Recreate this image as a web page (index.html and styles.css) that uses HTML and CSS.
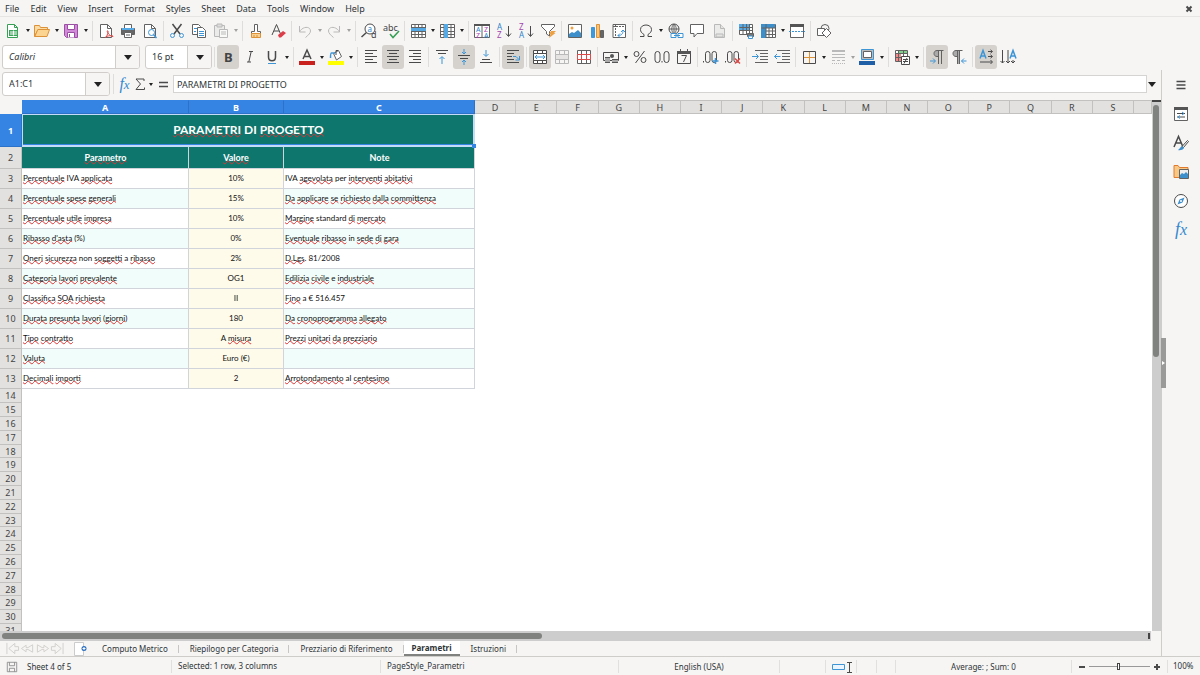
FILE: index.html
```html
<!DOCTYPE html>
<html lang="en">
<head>
<meta charset="utf-8">
<title>Parametri</title>
<link rel="stylesheet" href="styles.css">
</head>
<body>
<div class="app">
<nav class="menubar" aria-label="Menu">
<button>File</button><button>Edit</button><button>View</button><button>Insert</button><button>Format</button><button>Styles</button><button>Sheet</button><button>Data</button><button>Tools</button><button>Window</button><button>Help</button>
<button class="close" aria-label="Close"><svg viewBox="0 0 8 8" width="8" height="8"><path class="k heavy" d="M1.5 1.5l5 5M6.500 1.500l-5 5"/></svg></button>
</nav>

<div class="toolbar standard" role="toolbar" aria-label="Standard">
<button class="tool" aria-label="New"><svg viewBox="0 0 16 16"><path class="gn paper" d="M2.500 1.500h7l3 3v10h-10z"/><path class="gn" d="M9.500 1.500v3h3"/><path class="gnf" d="M4 7h9v6H4z"/><path class="w" d="M5 9h7M5 11h7M8.500 7.500v5"/></svg></button><button class="arrow" aria-label="New options"></button>
<button class="tool" aria-label="Open"><svg viewBox="0 0 16 16"><path class="o" fill="#fbdca5" d="M.5 13.500v-11h5l1 2h7v3h-10z"/><path class="o" fill="#fcd491" d="M.8 13.500l3-7h11.700l-2.500 7z"/></svg></button><button class="arrow" aria-label="Open options"></button>
<button class="tool" aria-label="Save"><svg viewBox="0 0 16 16"><path class="p" fill="#d08ad8" d="M1.500 1.500h13v13h-11l-2-2z"/><path class="p" fill="#fff" d="M4.500 1.500h7v5h-7zM4.500 14.500v-5h7v5"/><path class="p" d="M6.500 11v3"/></svg></button><button class="arrow" aria-label="Save options"></button>
<i class="sep"></i>
<button class="tool" aria-label="Export as PDF"><svg viewBox="0 0 16 16"><path class="paper" d="M2.500 1.500h7l4 4v9h-11z"/><path d="M9.500 1.500v4h4"/><path class="r" d="M7.500 15c2-3 3-6 2.500-7-1-1-1 1 0 2 1 2 3 3.500 5 3.500 1-1-4-1.500-7.500.5"/></svg></button>
<button class="tool" aria-label="Print"><svg viewBox="0 0 16 16"><path class="paper" d="M4.500 6V1.500h7V6"/><path fill="#666" d="M1.500 5.500h13v6h-13z"/><path class="blf" d="M2 5h12v2H2z"/><path class="paper" d="M4.500 9.500h7v5h-7z"/><path d="M6 12h4"/></svg></button>
<button class="tool" aria-label="Print preview"><svg viewBox="0 0 16 16"><path class="paper" d="M2.500 1.500h7l4 4v9h-11z"/><path d="M9.500 1.500v4h4"/><circle class="b paper" cx="9.500" cy="9.500" r="3"/><path class="b wide" d="M11.500 11.500l3 3.500"/></svg></button>
<i class="sep"></i>
<button class="tool" aria-label="Cut"><svg viewBox="0 0 16 16"><path class="k wide" d="M3.500 1l7.500 10M12.500 1L5 11"/><circle class="b" cx="3.500" cy="12.500" r="2"/><circle class="b" cx="12.500" cy="12.500" r="2"/></svg></button>
<button class="tool" aria-label="Copy"><svg viewBox="0 0 16 16"><path class="paper" d="M1.500 1.500h6l2 2v8h-8z"/><path class="b" d="M3 5.500h3M3 8.500h2"/><path class="paper" d="M6.500 4.500h5l3 3v7h-8z"/><path class="b" d="M8 8.500h5M8 10.500h5M8 12.500h5"/></svg></button>
<button class="tool dim" aria-label="Paste" disabled><svg viewBox="0 0 16 16"><path fill="#ddd" d="M1.500 2.500h10v11h-10z"/><path fill="#bbb" d="M4 1h5v3H4z"/><path class="paper" d="M6.500 6.500h8v8h-8z"/><path d="M8 9h5M8 11h5"/></svg></button><button class="arrow dim" aria-label="Paste options"></button>
<i class="sep"></i>
<button class="tool" aria-label="Clone formatting"><svg viewBox="0 0 16 16"><path class="paper" d="M6.500 8.500v-7h3v7h3v2h-9v-2z"/><path fill="#f8d193" class="o" d="M3.500 10.500h9v4h-9z"/><path class="o" d="M6 12v2M9 12v2"/></svg></button>
<button class="tool" aria-label="Clear formatting"><svg viewBox="0 0 16 16"><path class="k" d="M2 12l4.500-10.500L11 12M4 8h5"/><path class="rf" d="M8 12l5-4 3 2-5 4.500H9z"/></svg></button>
<i class="sep"></i>
<button class="tool dim" aria-label="Undo" disabled><svg viewBox="0 0 16 16"><path d="M2.500 3v6h6M2.500 9c3-6 11-6 11-1 0 2-2 4-5 6.500"/></svg></button><button class="arrow dim" aria-label="Undo list"></button>
<button class="tool dim" aria-label="Redo" disabled><svg viewBox="0 0 16 16"><path d="M13.500 3v6h-6M13.500 9c-3-6-11-6-11-1 0 2 2 4 5 6.500"/></svg></button><button class="arrow dim" aria-label="Redo list"></button>
<i class="sep"></i>
<button class="tool" aria-label="Find and replace"><svg viewBox="0 0 16 16"><circle class="k paper" cx="9" cy="6" r="5"/><path class="k wide" d="M5.500 9.500l-5 4.500"/><text class="tb" x="6.500" y="8.500" font-size="8">a</text><text class="tk" x="10" y="15" font-size="9">d</text></svg></button>
<button class="tool" aria-label="Spelling"><svg viewBox="0 0 16 16"><text class="tk" x="0" y="8" font-size="9">abc</text><path class="gn wide" d="M7 11l3 3.500 6-6.500"/></svg></button>
<i class="sep"></i>
<button class="tool" aria-label="Row"><svg viewBox="0 0 16 16"><path class="paper" d="M1.500 1.500h14v13h-14z"/><path d="M1.500 4.500h14M1.500 8.500h14M1.500 11.500h14M5 1.500v13M8.500 1.500v13M12 1.500v13"/><path class="blf" d="M1 5h15v3H1z"/></svg></button><button class="arrow" aria-label="Row options"></button>
<button class="tool" aria-label="Column"><svg viewBox="0 0 16 16"><path class="paper" d="M1.500 1.500h14v13h-14z"/><path d="M1.500 4.500h14M1.500 8.500h14M1.500 11.500h14M5 1.500v13M8.500 1.500v13M12 1.500v13"/><path class="blf" d="M5 1h4v14H5z"/></svg></button><button class="arrow" aria-label="Column options"></button>
<i class="sep"></i>
<button class="tool" aria-label="Sort"><svg viewBox="0 0 16 16"><path class="paper" d="M.5 1.500h15v13H.5zM8 1.500v13"/><path class="kf" d="M0 1h16v2H0z"/><text class="tb" x="2" y="9" font-size="7">A</text><text class="tp" x="10" y="9" font-size="7">Z</text><text class="tp" x="2" y="15" font-size="7">Z</text><text class="tb" x="10" y="15" font-size="7">A</text></svg></button>
<button class="tool" aria-label="Sort ascending"><svg viewBox="0 0 16 16"><text class="tb" x="1" y="7" font-size="8">A</text><text class="tp" x="1" y="15" font-size="8">Z</text><path class="k" d="M12.500 3v10M10 10.500l2.500 3 2.500-3"/></svg></button>
<button class="tool" aria-label="Sort descending"><svg viewBox="0 0 16 16"><text class="tp" x="1" y="7" font-size="8">Z</text><text class="tb" x="1" y="15" font-size="8">A</text><path class="k" d="M12.500 3v10M10 10.500l2.500 3 2.500-3"/></svg></button>
<button class="tool" aria-label="AutoFilter"><svg viewBox="0 0 16 16"><path class="paper" d="M1.500 1.500h13v2l-5 5v4.500l-3-2V8.500l-5-5z"/><path class="of" d="M11 8h5l-2 2h1.500L9 15l1.500-4H9z"/></svg></button>
<i class="sep"></i>
<button class="tool" aria-label="Image"><svg viewBox="0 0 16 16"><path class="paper" d="M1.500 1.500h13v13h-13z"/><circle class="of" cx="5" cy="5" r="1.500"/><path class="bf" d="M2 14v-3l3-2 2 1 4-3 3 3v4z"/></svg></button>
<button class="tool" aria-label="Chart"><svg viewBox="0 0 16 16"><path class="b" fill="#3c9bdc" d="M2.500 4.500h3v10h-3z"/><path class="o" fill="#f5c67c" d="M7.500 1.500h3v13h-3z"/><path fill="#666" d="M11.500 7.500h3v7h-3z"/></svg></button>
<button class="tool" aria-label="Pivot table"><svg viewBox="0 0 16 16"><path class="paper" d="M2 1.500h12.500v13H2z"/><path stroke-dasharray="2 1" d="M2 3.500h12M4.500 2v12"/><path class="b" d="M7 12.500c4 0 5-2 5-5M9 10.500l-2 2 2 2M10 9l2-2 2 2"/></svg></button>
<i class="sep"></i>
<button class="tool" aria-label="Special character"><svg viewBox="0 0 16 16"><path class="k" d="M2 13.500h4v-2C3.500 10 2.500 8.500 2.500 6.500c0-6 11-6 11 0 0 2-1 3.500-3.500 5v2h4"/></svg></button><button class="arrow" aria-label="More characters"></button>
<button class="tool" aria-label="Hyperlink"><svg viewBox="0 0 16 16"><circle class="k" cx="7" cy="6" r="5"/><path d="M2 6h10M7 1v10M7 1c-3 3-3 7 0 10M7 1c3 3 3 7 0 10"/><path class="b paper" d="M4 10.500h5v4H4zM11 10.500h5v4h-5z"/><path class="b" d="M7 12.500h6"/></svg></button>
<button class="tool" aria-label="Comment"><svg viewBox="0 0 16 16"><path class="paper" d="M1.500 1.500h13v9H8l-3 3.500v-3.500H1.500z"/></svg></button>
<button class="tool dim" aria-label="Headers and footers" disabled><svg viewBox="0 0 16 16"><path fill="#ddd" d="M3.500 1.500h6l4 4v9h-10z"/><path fill="#ccc" d="M9.500 1.500v4h4M5 11h7v3H5z"/></svg></button>
<i class="sep"></i>
<button class="tool" aria-label="Print area"><svg viewBox="0 0 16 16"><path class="paper" d="M1.500 1.500h13v10h-13z"/><path class="blf" d="M1 1h11v6H1z"/><path d="M1.500 4.500h13M1.500 7.500h13M5 1v11M8.500 1v11M11.500 1v10"/><path fill="#777" d="M9.500 10.500h6v3h-6z"/><path class="b paper" d="M10.500 13h4v2.500h-4z"/></svg></button>
<button class="tool" aria-label="Freeze rows and columns"><svg viewBox="0 0 16 16"><path class="paper" d="M1.500 1.500h14v13h-14z"/><path class="bf" d="M1 1h14v4H6v10H1z"/><path d="M1.500 5h14M6 8h9M6 11.500h9M6 1v14M9 5v10M12.500 5v10"/></svg></button><button class="arrow" aria-label="Freeze options"></button>
<button class="tool" aria-label="Split window"><svg viewBox="0 0 16 16"><path class="paper" d="M1.500 1.500h13v13h-13z"/><path class="kf" d="M1 1h14v3H1z"/><path class="b" stroke-dasharray="2 1" d="M0 8.500h16"/></svg></button>
<i class="sep"></i>
<button class="tool" aria-label="Show draw functions"><svg viewBox="0 0 16 16"><circle cx="9" cy="5.500" r="4"/><path class="paper" d="M1.500 5.500h7v7h-7z"/><path class="paper" d="M10.500 5.500l4.500 4.500-4.500 4.500L6 10z"/></svg></button>
</div>

<div class="toolbar formatting" role="toolbar" aria-label="Formatting">
<div class="combo font"><input aria-label="Font name" value="Calibri"><button aria-label="Font list"></button></div>
<div class="combo size"><input aria-label="Font size" value="16 pt"><button aria-label="Size list"></button></div>
<i class="sep"></i>
<button class="tool on" aria-label="Bold"><svg viewBox="0 0 16 16"><text class="tk" x="4" y="13" font-size="13" font-weight="700">B</text></svg></button>
<button class="tool" aria-label="Italic"><svg viewBox="0 0 16 16"><path class="k" d="M7 2.500h4M5 13h4M9.200 2.500L6.800 13"/></svg></button>
<button class="tool" aria-label="Underline"><svg viewBox="0 0 16 16"><path class="k wide" d="M4.500 2v6c0 5 7 5 7 0V2"/><path class="b" d="M4 14.500h8"/></svg></button><button class="arrow" aria-label="Underline options"></button>
<i class="sep"></i>
<button class="tool" aria-label="Font color"><svg viewBox="0 0 16 16"><path class="k wide" d="M4 10l4-9 4 9M5.500 7.500h5"/><path fill="#c9211e" stroke="none" d="M0 12h16v4H0z"/></svg></button><button class="arrow" aria-label="Font colors"></button>
<button class="tool" aria-label="Background color"><svg viewBox="0 0 16 16"><path class="paper" d="M5.500 4.500l5-3 3 6-5 3.500z"/><path class="k" d="M8 6V1.500h2"/><path class="b wide" d="M7 4H3.500C2.500 4 2.500 6 2.500 9"/><path fill="#ff0" stroke="none" d="M0 12h16v4H0z"/></svg></button><button class="arrow" aria-label="Background colors"></button>
<i class="sep"></i>
<button class="tool" aria-label="Align left"><svg viewBox="0 0 16 16"><path class="k" d="M2 1.500h12M2 4.500h8M2 7.500h12M2 10.500h8M2 13.500h12"/></svg></button>
<button class="tool on" aria-label="Center horizontally"><svg viewBox="0 0 16 16"><path class="k" d="M2 1.500h12M4 4.500h8M2 7.500h12M4 10.500h8M2 13.500h12"/></svg></button>
<button class="tool" aria-label="Align right"><svg viewBox="0 0 16 16"><path class="k" d="M2 1.500h12M6 4.500h8M2 7.500h12M6 10.500h8M2 13.500h12"/></svg></button>
<i class="sep"></i>
<button class="tool" aria-label="Align top"><svg viewBox="0 0 16 16"><path class="k" d="M2 1.500h12M4 4.500h8"/><path class="b" d="M8 15V8M5.500 10L8 7.500l2.500 2.500"/></svg></button>
<button class="tool on" aria-label="Center vertically"><svg viewBox="0 0 16 16"><path class="k" d="M2 6.500h12M4 9.500h8"/><path class="b" d="M8 0v5M6 3l2 2 2-2M8 16v-5M6 13l2-2 2 2"/></svg></button>
<button class="tool" aria-label="Align bottom"><svg viewBox="0 0 16 16"><path class="k" d="M4 10.500h8M2 13.500h12"/><path class="b" d="M8 1v6M5.500 5L8 7.500 10.500 5"/></svg></button>
<i class="sep"></i>
<button class="tool on" aria-label="Wrap text"><svg viewBox="0 0 16 16"><path class="k" d="M2 1.500h12M2 4.500h7M2 7.500h5M2 10.500h7M2 13.500h12"/><path class="b" d="M8 7.500h3l3 3M14.500 7v4h-4"/></svg></button>
<i class="sep"></i>
<button class="tool on" aria-label="Merge and center cells"><svg viewBox="0 0 16 16"><path class="k paper" d="M1.500 1.500h13v13h-13z"/><path class="k" d="M5.500 1v14M10.500 1v14"/><path class="k paper" d="M1.500 4.500h13v7h-13z"/><path class="b" d="M3 8h10M5 6L3 8l2 2M11 6l2 2-2 2"/></svg></button>
<button class="tool dim" aria-label="Merge cells" disabled><svg viewBox="0 0 16 16"><path d="M1.500 1.500h13v13h-13zM5.500 1v14M10.500 1v14"/><path fill="#ccc" d="M1.500 5.500h13v5h-13z"/></svg></button>
<button class="tool" aria-label="Unmerge cells"><svg viewBox="0 0 16 16"><path class="paper" d="M1.500 1.500h13v13h-13z"/><path d="M5.500 1v14M10.500 1v14"/><path class="r paper" d="M1.500 5.500h13v5h-13zM5.500 5v6M10.500 5v6"/></svg></button>
<i class="sep"></i>
<button class="tool" aria-label="Format as currency"><svg viewBox="0 0 16 16"><path class="k" d="M.5 3.500h15v8H.5z"/><circle class="kf" cx="9" cy="7" r="2"/><path class="kf" d="M2 8h5v6H2zM9 10h6v4H9z"/><path class="w" d="M2 10h5M2 12h5M9 12h6"/></svg></button><button class="arrow" aria-label="Currency options"></button>
<button class="tool" aria-label="Format as percent"><svg viewBox="0 0 16 16"><circle class="k" cx="4.500" cy="5" r="2.500"/><circle class="k" cx="11.500" cy="11" r="2.500"/><path class="k" d="M12.500 2L3.500 14"/></svg></button>
<button class="tool" aria-label="Format as number"><svg viewBox="0 0 16 16"><rect class="k" x="1" y="2.500" width="5" height="11" rx="2.500"/><path class="k" d="M8 12v1.500"/><rect class="k" x="10" y="2.500" width="5" height="11" rx="2.500"/></svg></button>
<button class="tool" aria-label="Format as date"><svg viewBox="0 0 16 16"><path class="k" d="M1.500 2.500h13v12h-13z"/><path class="kf" d="M1 2h14v3H1zM4 0h1v3H4zM11 0h1v3h-1z"/><path class="k" d="M5.500 6.500h5L7.500 13"/></svg></button>
<i class="sep"></i>
<button class="tool" aria-label="Add decimal place"><svg viewBox="0 0 16 16"><path class="k" d="M.5 12v1.500"/><rect class="k" x="2.500" y="2.500" width="4.500" height="11" rx="2.200"/><rect class="k" x="9" y="2.500" width="4.500" height="11" rx="2.200"/><path class="b wide" d="M12.500 9v6M9.500 12h6"/></svg></button>
<button class="tool" aria-label="Delete decimal place"><svg viewBox="0 0 16 16"><path class="k" d="M.5 12v1.500"/><rect class="k" x="2.500" y="2.500" width="4.500" height="11" rx="2.200"/><rect class="k" x="9" y="2.500" width="4.500" height="11" rx="2.200"/><path class="r wide" d="M10 9.500l5 5M15 9.500l-5 5"/></svg></button>
<i class="sep"></i>
<button class="tool" aria-label="Increase indent"><svg viewBox="0 0 16 16"><path d="M3 1.500h13M8 4.500h8M8 7.500h8M8 10.500h8M3 13.500h13"/><path class="b" d="M0 7.500h6M4 5l2.500 2.500L4 10"/></svg></button>
<button class="tool" aria-label="Decrease indent"><svg viewBox="0 0 16 16"><path d="M3 1.500h13M8 4.500h8M8 7.500h8M8 10.500h8M3 13.500h13"/><path class="b" d="M.5 7.500h6M3 5L.5 7.500 3 10"/></svg></button>
<i class="sep"></i>
<button class="tool" aria-label="Borders"><svg viewBox="0 0 16 16"><path class="o" d="M8.500 2v12M2 8.500h12"/><path class="k" d="M2.500 2.500h12v12h-12z"/></svg></button><button class="arrow" aria-label="Border options"></button>
<button class="tool dim" aria-label="Border style" disabled><svg viewBox="0 0 16 16"><path class="heavy" d="M2 2h13"/><path d="M2 5.500h13M2 8.500h13"/><path stroke-dasharray="3 2" d="M2 11.500h13"/><path stroke-dasharray="1 1" d="M2 14.500h13"/></svg></button><button class="arrow dim" aria-label="Border styles"></button>
<button class="tool" aria-label="Border color"><svg viewBox="0 0 16 16"><path class="b" fill="#bbb" d="M2.500.5h12v10h-12z"/><path class="paper" d="M4.500 2.500h8v6h-8z"/><path fill="#1f5fa8" stroke="none" d="M0 12h16v4H0z"/></svg></button><button class="arrow" aria-label="Border colors"></button>
<i class="sep"></i>
<button class="tool" aria-label="Conditional formatting"><svg viewBox="0 0 16 16"><path class="paper" d="M1.500 1.500h12v11h-12z"/><path fill="#7fd08a" stroke="none" d="M5 2h8v2H5z"/><path fill="#ef8b88" stroke="none" d="M2 5h5v7H2z"/><path d="M1.500 4.500h12M1.500 8.500h12M4.500 1v12M9.500 1v12"/><path class="k paper" d="M7.500 7.500h8v8h-8z"/><path class="k" d="M9 10.500h5M9 12.500h5M13 9l-3 5.500"/></svg></button><button class="arrow" aria-label="Conditional options"></button>
<i class="sep"></i>
<button class="tool on" aria-label="Left to right"><svg viewBox="0 0 16 16"><path fill="#aaa" stroke="none" d="M9.500 1.500H8c-4 0-4 6 0 6h1.500z"/><path d="M14.500 1.500H8c-4 0-4 6 0 6h1.500M9.500 1.500V15M12.500 1.500V15"/><path class="b" d="M1 12h5M4 9.500L6.500 12 4 14.500"/></svg></button>
<button class="tool" aria-label="Right to left"><svg viewBox="0 0 16 16"><path fill="#aaa" stroke="none" d="M6.500 1.500H5c-4 0-4 6 0 6h1.500zM6.500 1.500h2V15h-2z"/><path d="M11.500 1.500H5c-4 0-4 6 0 6h1.500M6.500 1.500V15M8.500 1.500V15"/><path class="b" d="M10.500 12h5M13 9.500L10.500 12l2.500 2.500"/></svg></button>
<i class="sep"></i>
<button class="tool on" aria-label="Text direction from left to right"><svg viewBox="0 0 16 16"><path class="b wide" d="M2 9.500l3-8 3 8M3 7h4"/><path class="k" d="M10 2.500h4M12.500.8l2 1.700-2 1.700M10 7.500h4M12.500 5.800l2 1.700-2 1.700M2 13h12M12.500 11l2 2-2 2"/></svg></button>
<button class="tool" aria-label="Text direction from top to bottom"><svg viewBox="0 0 16 16"><path class="k" d="M2.500 1v13M.5 12l2 2 2-2M8 1v13M6 12l2 2 2-2M13 11v3M11 12l2 2 2-2"/><path class="b wide" d="M10 9.500l3-8 3 8M11 7h4"/></svg></button>
</div>

<div class="workspace">
<main class="document">
<div class="formulabar">
<div class="combo name"><input aria-label="Name box" value="A1:C1"><button aria-label="Named ranges"></button></div>
<i class="sep"></i>
<button class="mini" aria-label="Function wizard"><span class="fx">f<small>x</small></span></button>
<button class="mini" aria-label="Sum"><svg viewBox="0 0 12 14"><path class="k" d="M10 4V2H2l4.500 5L2 12.500h8.500v-2"/></svg></button><button class="arrow" aria-label="Functions"></button>
<button class="mini equals" aria-label="Formula"><svg viewBox="0 0 12 14"><path class="k wide" d="M2 5.500h9M2 9.500h9"/></svg></button>
<input class="formula" aria-label="Input line" value="PARAMETRI DI PROGETTO">
<button class="arrow big" aria-label="Expand formula bar"></button>
</div>

<div class="gridarea">
<div class="sheet">
<table>
<colgroup><col class="c-row"><col class="c-a"><col class="c-b"><col class="c-c"><col span="16"><col class="c-end"></colgroup>
<thead><tr><th class="corner"></th><th class="sel">A</th><th class="sel">B</th><th class="sel">C</th><th>D</th><th>E</th><th>F</th><th>G</th><th>H</th><th>I</th><th>J</th><th>K</th><th>L</th><th>M</th><th>N</th><th>O</th><th>P</th><th>Q</th><th>R</th><th>S</th><th></th></tr></thead>
<tbody class="data">
<tr class="title"><th class="sel">1</th><td colspan="3"><u>PARAMETRI</u> DI <u>PROGETTO</u><span class="handle"></span></td></tr>
<tr class="heads"><th>2</th><td><u>Parametro</u></td><td><u>Valore</u></td><td>Note</td></tr>
<tr><th>3</th><td><u>Percentuale</u> IVA <u>applicata</u></td><td>10%</td><td>IVA <u>agevolata</u> per <u>interventi</u> <u>abitativi</u></td></tr>
<tr><th>4</th><td><u>Percentuale</u> <u>spese</u> <u>generali</u></td><td>15%</td><td><u>Da</u> <u>applicare</u> <u>se</u> <u>richiesto</u> <u>dalla</u> <u>committenza</u></td></tr>
<tr><th>5</th><td><u>Percentuale</u> <u>utile</u> <u>impresa</u></td><td>10%</td><td><u>Margine</u> standard <u>di</u> <u>mercato</u></td></tr>
<tr><th>6</th><td><u>Ribasso</u> <u>d'asta</u> (%)</td><td>0%</td><td><u>Eventuale</u> <u>ribasso</u> in <u>sede</u> <u>di</u> <u>gara</u></td></tr>
<tr><th>7</th><td><u>Oneri</u> <u>sicurezza</u> non <u>soggetti</u> a <u>ribasso</u></td><td>2%</td><td><u>D.Lgs</u>. 81/2008</td></tr>
<tr><th>8</th><td><u>Categoria</u> <u>lavori</u> <u>prevalente</u></td><td>OG1</td><td><u>Edilizia</u> <u>civile</u> e <u>industriale</u></td></tr>
<tr><th>9</th><td><u>Classifica</u> <u>SOA</u> <u>richiesta</u></td><td>II</td><td><u>Fino</u> a € 516.457</td></tr>
<tr><th>10</th><td><u>Durata</u> <u>presunta</u> <u>lavori</u> (<u>giorni</u>)</td><td>180</td><td><u>Da</u> <u>cronoprogramma</u> <u>allegato</u></td></tr>
<tr><th>11</th><td><u>Tipo</u> <u>contratto</u></td><td>A <u>misura</u></td><td><u>Prezzi</u> <u>unitari</u> <u>da</u> <u>prezziario</u></td></tr>
<tr><th>12</th><td><u>Valuta</u></td><td>Euro (€)</td><td></td></tr>
<tr><th>13</th><td><u>Decimali</u> <u>importi</u></td><td>2</td><td><u>Arrotondamento</u> al <u>centesimo</u></td></tr>
</tbody>
<tbody class="blank">
<tr><th>14</th></tr><tr><th>15</th></tr><tr><th>16</th></tr><tr><th>17</th></tr><tr><th>18</th></tr><tr><th>19</th></tr><tr><th>20</th></tr><tr><th>21</th></tr><tr><th>22</th></tr><tr><th>23</th></tr><tr><th>24</th></tr><tr><th>25</th></tr><tr><th>26</th></tr><tr><th>27</th></tr><tr><th>28</th></tr><tr><th>29</th></tr><tr><th>30</th></tr><tr><th>31</th></tr>
</tbody>
</table>
</div>
<div class="vscroll"><div class="vthumb"></div></div>
</div>
<div class="hscroll"><div class="hthumb"></div><div class="hsplit"></div></div>

<div class="tabs">
<button class="nav" aria-label="First sheet"><svg viewBox="0 0 15 14"><path d="M1.500 1v12M3.500 7L10 1.500V5h4v4h-4v3.500z"/></svg></button>
<button class="nav" aria-label="Previous sheet"><svg viewBox="0 0 15 14"><path d="M1 7l5-3.500V6h2l5-3v8L8 8H6v2.500z"/></svg></button>
<button class="nav" aria-label="Next sheet"><svg viewBox="0 0 15 14"><path d="M14 7L9 3.500V6H7L2 3v8l5-3h2v2.500z"/></svg></button>
<button class="nav" aria-label="Last sheet"><svg viewBox="0 0 15 14"><path d="M13.500 1v12M11.500 7L5 1.500V5H1v4h4v3.500z"/></svg></button>
<button class="add" aria-label="Add sheet"><svg viewBox="0 0 14 14"><path fill="#fff" stroke="#ccc" d="M1.500.5h9v13h-9z"/><circle cx="11" cy="6.500" r="2.500" fill="#2b6fc0" stroke="none"/><path class="w" d="M9.500 6.500h3M11 5v3"/></svg></button>
<button class="tab">Computo Metrico</button><button class="tab">Riepilogo per Categoria</button><button class="tab">Prezziario di Riferimento</button><button class="tab active">Parametri</button><button class="tab">Istruzioni</button>
</div>
</main>

<aside class="sidebar">
<button aria-label="Sidebar settings"><svg viewBox="0 0 16 16"><path class="k wide" d="M3.500 4.500h9M3.500 8h9M3.500 11.500h9"/></svg></button>
<button aria-label="Properties"><svg viewBox="0 0 16 16"><path class="paper" d="M1.500 1.500h13v13h-13z"/><path class="kf" d="M1 1h14v3H1z"/><path class="k" d="M4 7.500h8M4 11h8"/><path class="b" d="M9 6l2 1.500-2 1.500M7 9.500L5 11l2 1.500"/></svg></button>
<button aria-label="Styles"><svg viewBox="0 0 16 16"><path class="k wide" d="M1 12L5.500 1.500 10 12M3 8h5"/><path class="k paper" d="M14.500 5.500l1 1-5 6-1.500-1z"/><path class="bf" d="M9 11l2 2c-1 2-4 2.500-6 2 2-1 2-3 4-4z"/></svg></button>
<button aria-label="Gallery"><svg viewBox="0 0 16 16"><path class="og" fill="#f9c784" d="M1 13.500v-12h4l1.500 2h8.500v10z"/><path fill="#eee" d="M6.500 5.500h9v9h-9z"/><path class="bf" d="M7 14v-3l2-2 2 1 2-2 2 2v4z"/></svg></button>
<button aria-label="Navigator"><svg viewBox="0 0 16 16"><circle class="k paper" cx="8" cy="8" r="6.500"/><path class="bf" d="M11.500 4.500L9.500 9.500l-5 2 2-5z"/><circle cx="8" cy="8" r="1" fill="#fff" stroke="none"/></svg></button>
<button aria-label="Functions"><span class="fx large">f<small>x</small></span></button>
<div class="grip"><svg viewBox="0 0 5 6"><path fill="#fff" stroke="none" d="M1 1l3 2-3 2z"/></svg></div>
</aside>
</div>

<footer class="status">
<span class="mid"><svg viewBox="0 0 14 14" width="12" height="12"><path stroke="#888" d="M1.500 1.500h11v11h-11zM4 1.500v4h6v-4M4 12.500V8.500h6v4"/></svg></span>
<span>Sheet 4 of 5</span>
<span class="bar">Selected: 1 row, 3 columns</span>
<span class="bar">PageStyle_Parametri</span>
<span class="bar mid">English (USA)</span>
<span class="bar"></span>
<span class="bar mid"><svg viewBox="0 0 22 12" width="22" height="12"><path class="b" fill="#eaf5ff" d="M2.500 3.500h12v5h-12z"/><path class="k" d="M17 1.500h5M17 11.500h5M19.500 1.500v10"/></svg></span>
<span class="bar"></span>
<span class="bar"></span>
<span class="bar mid">Average: ; Sum: 0</span>
<span class="bar zoom"><button aria-label="Zoom out"><svg viewBox="0 0 8 8"><path class="k heavy" d="M1 4h6"/></svg></button><input type="range" min="0" max="100" value="49" aria-label="Zoom"><button aria-label="Zoom in"><svg viewBox="0 0 8 8"><path class="k heavy" d="M1 4h6M4 1v6"/></svg></button></span>
<span class="bar">100%</span>
</footer>
</div>
</body>
</html>
```

FILE: styles.css
```css
* { box-sizing: border-box; }

body {
  margin: 0;
  background: #f6f5f4;
  color: #2e3436;
  font: 9px/12px "Noto Sans", sans-serif;
}

button, input { margin: 0; padding: 0; border: 0; background: none; color: inherit; font: inherit; }
button { display: inline-flex; align-items: center; justify-content: center; flex: none; }

.app { display: flex; flex-direction: column; height: 100vh; overflow: hidden; }

/* Icons */
svg { display: block; fill: none; stroke: #626262; stroke-width: 1; overflow: visible; }
svg text { stroke: none; font-family: "Noto Sans", sans-serif; }
.k { stroke: #4a4a4a; }
.b { stroke: #3d95d6; }
.r { stroke: #dd4a48; }
.o { stroke: #dd9238; }
.og { stroke: #e07a2c; }
.p { stroke: #9a4fa3; }
.gn { stroke: #35a054; }
.w { stroke: #fff; }
.wide { stroke-width: 1.5; }
.heavy { stroke-width: 2; }
.paper { fill: #fff; }
.kf { fill: #555; stroke: none; }
.bf { fill: #3d8fcc; stroke: none; }
.blf { fill: #55a9e4; stroke: none; }
.gnf { fill: #3ba45b; stroke: none; }
.rf { fill: #dc3d48; stroke: none; }
.of { fill: #eda145; stroke: none; }
.tk { fill: #444; }
.tb { fill: #2c83c9; }
.tp { fill: #a445ae; }
.fx { color: #3489cf; font: italic 16px/16px "Liberation Serif", serif; }
.fx small { font-size: 13px; }
.fx.large { font-size: 18px; }
.fx.large small { font-size: 16px; }

/* Menu */
.menubar { display: flex; flex: none; gap: 1px; height: 17px; padding: 1px 6px 0 0; border-bottom: 1px solid #e6e5e3; }
.menubar button { padding: 0 5px; }
.menubar .close { margin-left: auto; padding: 0 1px; }

/* Toolbars */
.toolbar { display: flex; flex: none; align-items: center; padding-left: 2px; }
.standard { height: 27px; }
.formatting { height: 26px; }
.tool { width: 22px; height: 24px; border-radius: 3px; }
.tool svg { width: 16px; height: 16px; }
.tool.on { background: #d5d2ce; }
.dim { opacity: .4; }
.arrow { width: 7px; height: 20px; }
.arrow::after, .combo button::after {
  content: "";
  border: solid transparent;
  border-width: 3px 2px 0;
  border-top-color: #222;
}
.sep { flex: none; width: 5px; height: 20px; background: linear-gradient(#dedddb, #dedddb) center / 1px 100% no-repeat; }
.arrow + .sep { width: 6px; }
.combo button::after, .arrow.big::after { border-width: 5px 4px 0; }

.combo { display: flex; flex: none; height: 24px; border: 1px solid #d0cdca; border-radius: 3px; background: #fff; overflow: hidden; }
.combo input { flex: 1; min-width: 0; padding: 0 6px; }
.combo button { width: 24px; border-left: 1px solid #d0cdca; background: #f6f5f4; }
.combo.font { width: 138px; margin-right: 5px; }
.combo.font input { font-style: italic; }
.combo.size { width: 67px; }
.combo.name { width: 108px; }

/* Document and side bar */
.workspace { display: flex; flex: 1; min-height: 0; }
.document { display: flex; flex: 1; flex-direction: column; min-width: 0; }
.formulabar { display: flex; flex: none; align-items: center; height: 30px; padding: 0 4px 2px 2px; }
.formulabar > .sep { margin: 0 1px; }
.mini { width: 15px; }
.mini svg { width: 12px; height: 14px; }
.mini.equals { width: 18px; margin-right: 1px; }
.formula { flex: 1; min-width: 0; height: 18px; padding: 0 3px; border: 1px solid #d6d4d2; background: #fff; }
.arrow.big { width: 10px; }

.gridarea { display: flex; flex: 1; min-height: 0; background: #fff; }
.sheet { flex: 1; min-width: 0; overflow: hidden; }
.vscroll { flex: none; width: 9px; padding: 3px 2px 0 1px; border-top: 2px solid #444; background: #cdcdcd; }
.vthumb { height: 48%; border-radius: 3px; background: #80827f; }
.hscroll { display: flex; flex: none; align-items: center; justify-content: space-between; height: 10px; margin-right: 10px; padding: 0 1px 0 2px; background: #cdcdcd; }
.hthumb { width: 47%; height: 6px; border-radius: 3px; background: #80827f; }
.hsplit { width: 2px; height: 6px; background: #444; }

table { width: 100%; border-spacing: 0; table-layout: fixed; }
.c-row { width: 22px; }
.c-a { width: 167px; }
.c-b { width: 95px; }
.c-c { width: 191px; }
.c-end { width: 18px; }
th, td { padding: 0; overflow: hidden; white-space: nowrap; }
th { border: solid #c2c1bf; border-width: 0 1px 1px 0; background: #e2e1df; color: #444; font-weight: 400; line-height: 11px; }
thead th { height: 14px; border-top-width: 1px; }
th.corner { border-color: #f6f5f4; background: #f6f5f4; }
th.sel { border-color: #2c72c8; background: #3584e4; color: #fff; font-weight: 700; }
thead th.sel { border-top-color: #3584e4; }
td { border: solid #d1d5db; border-width: 0 1px 1px 0; color: #111; font-family: Lato, sans-serif; line-height: 11px; }
.data tr { height: 20px; }
.data td { padding-left: 1px; font-size: 8px; }
.data td:nth-child(3) { padding: 0; background: #fffbeb; text-align: center; }
.data tr:nth-child(even) td:not(:nth-child(3)) { background: #f0fdfa; }
.data .title { height: 33px; }
.data .title td {
  position: relative;
  border: solid #c5dcf8;
  border-width: 1px 2px 2px 1px;
  box-shadow: inset 0 -1px #3584e4;
  background: #0f766e;
  color: #fff;
  font-size: 12px;
  font-weight: 700;
  line-height: 16px;
  text-align: center;
  overflow: visible;
}
.handle { position: absolute; right: -3px; bottom: -3px; width: 4px; height: 4px; background: #3584e4; }
.data .heads { height: 22px; }
.data tr.heads td:nth-child(n):nth-child(n) { background: #0f766e; color: #fff; font-size: 9px; font-weight: 700; text-align: center; }
.data u { text-decoration: underline wavy #dd3333 1px; text-decoration-skip-ink: none; text-underline-offset: -1px; }
.blank tr { height: 14px; }
.blank tr:nth-child(5n) { height: 13px; }

/* Sheet tabs */
.tabs { display: flex; flex: none; height: 16px; padding-left: 5px; border-bottom: 1px solid #cfcdca; }
.nav { width: 15px; }
.nav svg { width: 15px; height: 13px; stroke: #d0cecb; }
.add { width: 26px; padding-left: 3px; }
.add svg { width: 14px; height: 14px; }
.tab { position: relative; padding: 0 11px; font-size: 8px; }
.tab::after { content: ""; position: absolute; right: 0; top: 4px; width: 1px; height: 8px; background: #c8c6c4; }
.tab.active { padding: 0 8px; border-bottom: 2px solid #80827f; background: #fff; font-weight: 700; }
.tab.active::after { content: none; }

.sidebar { position: relative; display: flex; flex: none; flex-direction: column; align-items: center; width: 39px; border-left: 1px solid #cfcdca; border-bottom: 1px solid #cfcdca; }
.sidebar button { width: 29px; height: 29px; }
.sidebar svg { width: 16px; height: 16px; }
.grip { position: absolute; left: -1px; top: 50%; display: flex; align-items: center; width: 5px; height: 50px; margin-top: -25px; background: #9a9a98; }
.sidebar .grip svg { width: 5px; height: 6px; }

/* Status bar */
.status { display: grid; flex: none; grid-template-columns: 24px 147fr 209fr 238fr 161fr 46px 31px 20px 19px 176fr 96px 33px; align-items: center; height: 18px; padding-top: 1px; font-size: 8px; }
.status > span { padding: 0 3px; white-space: nowrap; }
.status > .bar { height: 13px; padding: 0 6px; border-left: 1px solid #e2e0de; }
.status > .bar:last-child { padding: 0 5px; }
.status > .mid { display: flex; align-items: center; justify-content: center; }
.status > .zoom { display: flex; align-items: center; gap: 3px; }
.zoom svg { width: 8px; height: 8px; }
.zoom input { flex: 1; min-width: 0; height: 10px; appearance: none; background: linear-gradient(#999, #999) center / 100% 1px no-repeat; }
.zoom input::-webkit-slider-thumb { appearance: none; width: 3px; height: 7px; border: 1px solid #444; background: #fff; }
```
